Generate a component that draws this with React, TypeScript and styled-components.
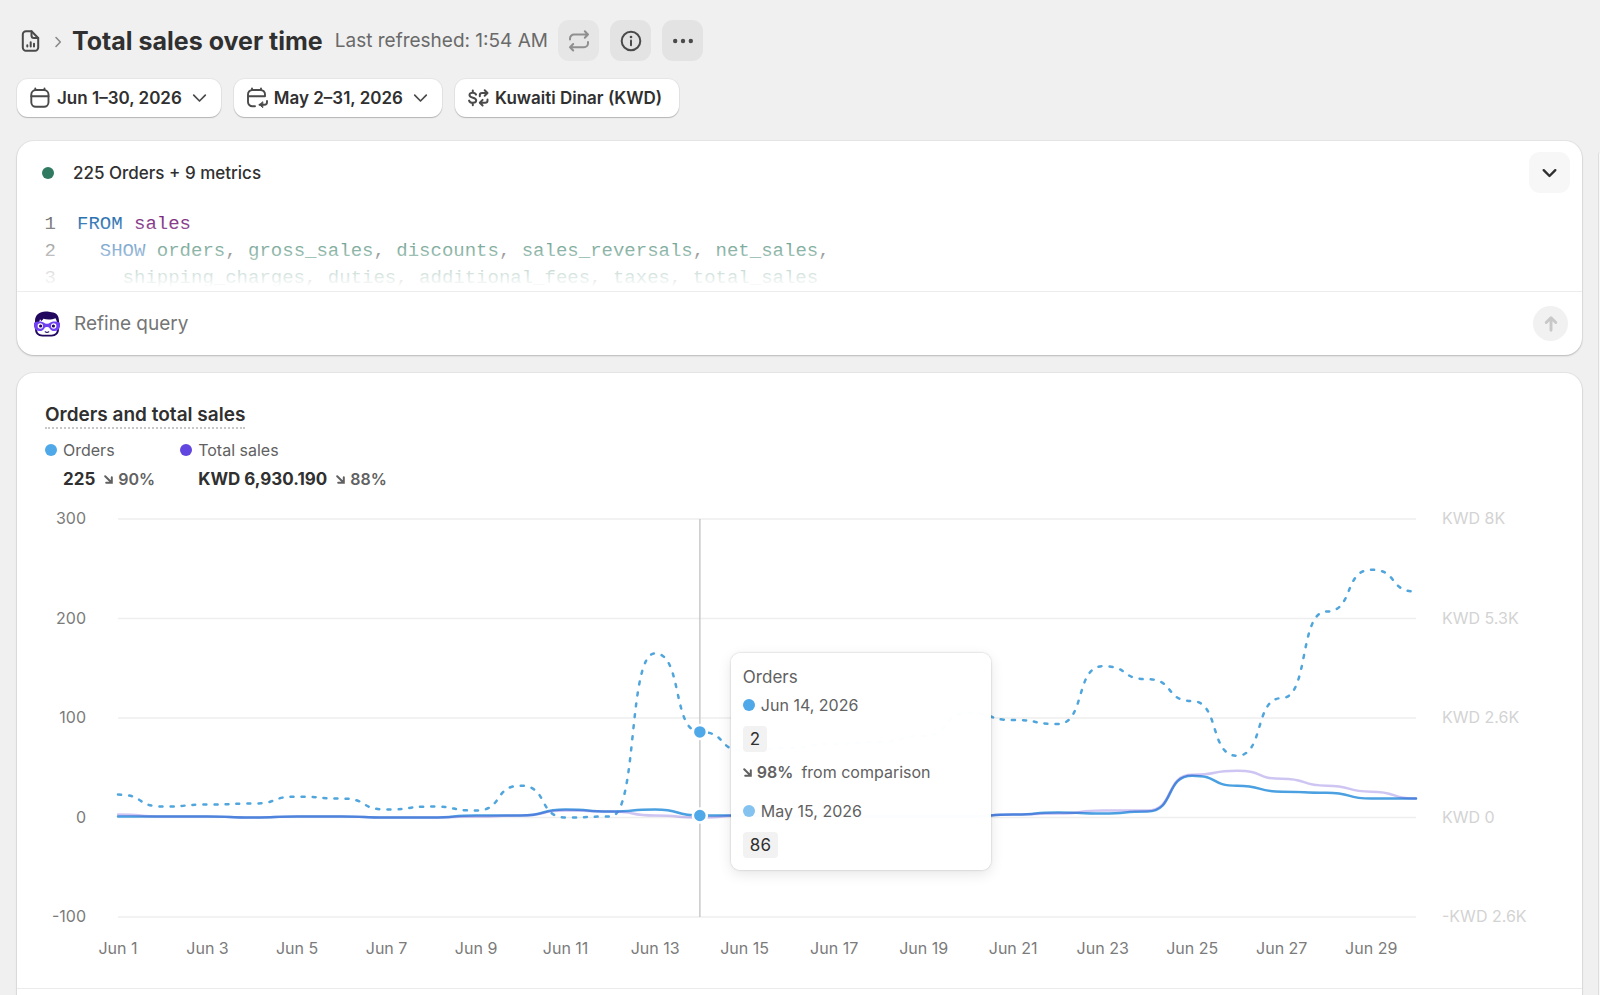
import React, { useLayoutEffect, useRef, useState } from "react";
import styled, { createGlobalStyle } from "styled-components";

const GlobalStyle = createGlobalStyle`
  *, *::before, *::after { box-sizing: border-box; }
  body {
    margin: 0;
    background: #f0f0f0;
    color: #303030;
    font-family: Inter, "Liberation Sans", sans-serif;
    font-size: 16px;
    overflow-x: hidden;
  }
  #root { height: 100vh; overflow: hidden; }
  button, input { font: inherit; color: inherit; }
  h1, h2, p, ul, ol, dl, dd { margin: 0; padding: 0; }
  ul, ol { list-style: none; }
`;

const Shell = styled.div`
  display: flex;
  min-height: 100vh;
`;

const Main = styled.main`
  flex: 1;
  min-width: 0;
  padding: 20px 16px 0 17px;
`;

const SidePanel = styled.aside`
  width: 2px;
  margin-top: 152px;
  border-left: 1px solid #dedede;
  border-top-left-radius: 16px;
  background: #f8f8f8;
`;

const TitleBar = styled.header`
  display: flex;
  align-items: center;
  height: 41px;
  padding-left: 3px;
`;

const Crumb = styled.a`
  display: flex;
  color: #4a4a4a;
`;

const CrumbArrow = styled.span`
  display: flex;
  margin: 3px 10px 0 12px;
  color: #8a8a8a;
`;

const Title = styled.h1`
  font-size: 25px;
  line-height: 32px;
  font-weight: 650;
  white-space: nowrap;
`;

const Refreshed = styled.p`
  margin: 0 10px 0 12px;
  font-size: 19px;
  line-height: 28px;
  color: #6a6a6a;
  white-space: nowrap;
`;

const ActionGroup = styled.div`
  display: flex;
  gap: 11px;
`;

const IconButton = styled.button<{ $tone?: "muted" | "plain" }>`
  display: flex;
  align-items: center;
  justify-content: center;
  width: 41px;
  height: 41px;
  padding: 0;
  border: 0;
  border-radius: 11px;
  background: ${(p) =>
    p.$tone === "muted" ? "#e6e6e6" : p.$tone === "plain" ? "#f7f7f7" : "#e3e3e3"};
  color: ${(p) =>
    p.$tone === "muted" ? "#8f8f8f" : p.$tone === "plain" ? "#303030" : "#4a4a4a"};
`;

const Filters = styled.div`
  display: flex;
  gap: 13px;
  margin: 18px 0 24px;
`;

const FilterButton = styled.button<{ $menu?: boolean }>`
  display: flex;
  align-items: center;
  height: 38px;
  padding: 0 ${(p) => (p.$menu ? 14 : 17)}px 0 13px;
  border: 0;
  border-radius: 11px;
  background: #fff;
  box-shadow: 0 1px 1px #b5b5b5, 0 0 0 1px #e6e6e6;
  font-size: 17px;
  line-height: 24px;
  font-weight: 600;
  white-space: nowrap;
  svg { color: #4a4a4a; }
  svg:first-child { margin-right: 6px; }
  svg:last-child:not(:first-child) { margin-left: 10px; }
`;

const Card = styled.section<{ $continues?: boolean }>`
  border-radius: ${(p) => (p.$continues ? "17px 17px 0 0" : "17px")};
  padding-bottom: ${(p) => (p.$continues ? 40 : 0)}px;
  background: #fff;
  box-shadow: 0 1px 2px rgba(0, 0, 0, 0.2), 0 0 0 1px #e6e6e6;
  & + & { margin-top: 18px; }
`;

const QueryHead = styled.div`
  display: flex;
  align-items: center;
  padding: 11px 12px 0 25px;
  font-size: 17px;
  line-height: 24px;
  font-weight: 450;
  button { margin-left: auto; }
`;

const Dot = styled.span<{ $color: string }>`
  flex: none;
  width: 12px;
  height: 12px;
  border-radius: 50%;
  background: ${(p) => p.$color};
`;

const QueryName = styled.p`
  margin-left: 19px;
`;

const Code = styled.ol`
  position: relative;
  height: 99px;
  padding-top: 18px;
  overflow: hidden;
  border-bottom: 1px solid #ededed;
  font-family: "Liberation Mono", monospace;
  font-size: 19px;
  line-height: 27px;
  &::after {
    content: "";
    position: absolute;
    inset: 24px 0 0;
    background: linear-gradient(rgba(255, 255, 255, 0), #fff 95%);
  }
`;

const CodeLine = styled.li<{ $indent: number }>`
  display: flex;
  white-space: pre;
  code {
    padding-left: ${(p) => p.$indent}ch;
    font: inherit;
  }
`;

const LineNo = styled.span`
  width: 39px;
  margin-right: 21px;
  text-align: right;
  color: #6f6f6f;
`;

const Keyword = styled.span`
  color: #2a70b0;
`;
const Table = styled.span`
  color: #7c2a80;
`;
const Field = styled.span`
  color: #247157;
`;

const RefineForm = styled.form`
  display: flex;
  align-items: center;
  height: 63px;
  padding: 0 14px 0 17px;
`;

const RefineInput = styled.input`
  flex: 1;
  min-width: 0;
  margin: 0 14px;
  padding: 0;
  border: 0;
  outline: 0;
  background: none;
  font-size: 19px;
  line-height: 28px;
  &::placeholder { color: #757575; opacity: 1; }
`;

const SendButton = styled.button`
  display: flex;
  align-items: center;
  justify-content: center;
  width: 35px;
  height: 35px;
  padding: 0;
  border: 0;
  border-radius: 50%;
  background: #f1f1f1;
  color: #c8c8c8;
`;

const ChartSection = styled.div`
  padding: 30px 28px 28px;
  border-bottom: 1px solid #ebebeb;
`;

const ChartTitle = styled.h2`
  width: fit-content;
  border-bottom: 2px dotted #c8c8c8;
  font-size: 19px;
  line-height: 24px;
  font-weight: 580;
`;

const Legend = styled.ul`
  display: flex;
  gap: 25px;
  margin-top: 8px;
`;

const LegendItem = styled.li`
  display: grid;
  grid-template-columns: 12px auto;
  column-gap: 6px;
  row-gap: 4px;
  align-items: center;
`;

const LegendName = styled.span`
  font-size: 16px;
  line-height: 26px;
  color: #616161;
`;

const LegendValue = styled.span`
  display: flex;
  align-items: center;
  grid-column: 2;
  font-size: 17px;
  line-height: 24px;
  font-weight: 650;
`;

const Trend = styled.span`
  display: flex;
  align-items: center;
  gap: 5px;
  margin-left: 9px;
  font-size: 16px;
  font-weight: 600;
  color: #616161;
`;

const ChartGrid = styled.div`
  display: grid;
  grid-template-columns: 73px minmax(0, 1fr) 138px;
  margin-top: 15px;
`;

const Axis = styled.ul<{ $side: "left" | "right" }>`
  display: flex;
  flex-direction: column;
  justify-content: space-between;
  padding: ${(p) => (p.$side === "left" ? "0 32px 0 0" : "0 0 0 26px")};
  font-size: 16px;
  line-height: 24px;
  text-align: ${(p) => (p.$side === "left" ? "right" : "left")};
  color: ${(p) => (p.$side === "left" ? "#7b7b7b" : "#d3d3d3")};
  white-space: nowrap;
`;

const Plot = styled.div`
  position: relative;
  height: 422px;
  padding: 13px 0 11px;
  svg { display: block; overflow: visible; }
`;

const Days = styled.ol`
  display: flex;
  grid-column: 2;
  margin: 8px 0 0 calc(-100% / 29);
  font-size: 16px;
  line-height: 24px;
  color: #7b7b7b;
  li { flex: 1 1 0; text-align: center; white-space: nowrap; }
`;

const Tooltip = styled.div`
  position: absolute;
  top: 147px;
  left: calc(100% * 13 / 29 + 31px);
  width: 260px;
  padding: 12px;
  border-radius: 9px;
  background: rgba(255, 255, 255, 0.98);
  box-shadow: 0 0 2px rgba(0, 0, 0, 0.25), 0 4px 14px rgba(0, 0, 0, 0.1);
  font-size: 16px;
  line-height: 24px;
  color: #616161;
`;

const TooltipTitle = styled.p`
  font-size: 17px;
`;

const TooltipDate = styled.p`
  display: flex;
  align-items: center;
  gap: 6px;
  padding: 4px 0 9px;
`;

const TooltipValue = styled.span`
  display: block;
  width: fit-content;
  padding: 0 7px;
  border-radius: 4px;
  background: #f2f2f2;
  font-size: 17px;
  line-height: 26px;
  color: #303030;
`;

const TooltipTrend = styled.p`
  display: flex;
  align-items: center;
  gap: 5px;
  padding: 8px 0 11px;
  b { font-weight: 600; margin-right: 3px; }
`;

const stroke = {
  fill: "none",
  stroke: "currentColor",
  strokeLinecap: "round" as const,
  strokeLinejoin: "round" as const,
};

const ReportIcon = () => (
  <svg width="22" height="24" viewBox="0 0 22 24" {...stroke} strokeWidth="2" aria-hidden="true">
    <path d="M11.5 2.2H6a3.2 3.2 0 0 0-3.2 3.2v13.2A3.2 3.2 0 0 0 6 21.800h9a3.2 3.2 0 0 0 3.2-3.2V9z" />
    <path d="M11.5 2.2v4.3A2.5 2.5 0 0 0 14 9h4.2" />
    <path d="M7.3 16.3v1.200M10.700 13.300v4.200M14 14.800v2.700" />
  </svg>
);

const CrumbChevron = () => (
  <svg width="8" height="12" viewBox="0 0 8 12" {...stroke} strokeWidth="1.6" aria-hidden="true">
    <path d="M2 1.5 6.3 6 2 10.5" />
  </svg>
);

const RefreshIcon = () => (
  <svg width="24" height="24" viewBox="0 0 24 24" {...stroke} strokeWidth="2" aria-hidden="true">
    <path d="M3 10.5V9.500a4 4 0 0 1 4-4H21M17.800 2.200 21 5.500l-3.200 3.300" />
    <path d="M21 13v1.200a4 4 0 0 1-4 4H3M6.200 15 3 18.200l3.200 3.300" />
  </svg>
);

const InfoIcon = () => (
  <svg width="24" height="24" viewBox="0 0 24 24" {...stroke} strokeWidth="2" aria-hidden="true">
    <circle cx="12" cy="12" r="9.300" />
    <path d="M12 11.500v4.700" />
    <circle cx="12" cy="8" r="1.300" fill="currentColor" stroke="none" />
  </svg>
);

const MoreIcon = () => (
  <svg width="24" height="24" viewBox="0 0 24 24" fill="currentColor" aria-hidden="true">
    <circle cx="4.200" cy="12" r="2.200" />
    <circle cx="12" cy="12" r="2.200" />
    <circle cx="19.800" cy="12" r="2.200" />
  </svg>
);

const CalendarIcon = () => (
  <svg width="21" height="22" viewBox="0 0 21 22" {...stroke} strokeWidth="1.900" aria-hidden="true">
    <rect x="1.300" y="3" width="17.200" height="16.800" rx="4.500" />
    <path d="M1.300 9.300h17.200M5.300 3V1.500M14.500 3V1.500" />
  </svg>
);

const CompareIcon = () => (
  <svg width="21" height="22" viewBox="0 0 21 22" {...stroke} strokeWidth="1.900" aria-hidden="true">
    <path d="M8 19.300H5.300a4.300 4.300 0 0 1-4.300-4.300V7.300A4.300 4.300 0 0 1 5.300 3h8.400A4.300 4.300 0 0 1 18 7.300v2H1M5 3V1.500M14 3V1.500" />
    <path d="M20 14v1.200a2.500 2.500 0 0 1-2.500 2.500h-5" />
    <path d="M15.500 15 12.500 17.700l3 2.700z" fill="currentColor" strokeWidth="1" />
  </svg>
);

const CurrencyIcon = () => (
  <svg width="21" height="20" viewBox="0 0 21 20" {...stroke} strokeWidth="2" aria-hidden="true">
    <path d="M8 6.600C7.500 5.200 6.300 4.700 4.700 4.700c-1.900 0-3.200.8-3.200 2.400C1.500 10.700 8.200 8.700 8.200 12.300c0 1.600-1.400 2.500-3.400 2.500-1.900 0-3.200-.7-3.700-2.200M4.800 2.500v2M4.800 15v2.300" />
    <path d="M11.800 8.300V7.300a2.300 2.300 0 0 1 2.300-2.300h5.200M16.700 2.200 19.500 5l-2.800 2.800" />
    <path d="M19.500 11.500v.900a2.300 2.300 0 0 1-2.300 2.300H12M14.600 11.900l-2.800 2.800 2.800 2.800" />
  </svg>
);

const ChevronDown = ({ heavy = false }: { heavy?: boolean }) => (
  <svg width="15" height="10" viewBox="0 0 15 10" {...stroke} strokeWidth={heavy ? 2.4 : 1.7} aria-hidden="true">
    <path d="M1.700 2.200 7.500 8l5.800-5.800" />
  </svg>
);

const ArrowUp = () => (
  <svg width="16" height="18" viewBox="0 0 16 18" {...stroke} strokeWidth="2.900" aria-hidden="true">
    <path d="M8 15.200V3.500M3.200 7.500 8 2.800l4.800 4.700" />
  </svg>
);

const TrendArrow = () => (
  <svg width="9" height="9" viewBox="0 0 9 9" {...stroke} strokeWidth="2" strokeLinejoin="miter" aria-hidden="true">
    <path d="M1.200 1.200 7 7M7.800 2.200v5.600H2.200" strokeLinejoin="miter" />
  </svg>
);

const Avatar = () => (
  <svg width="26" height="26" viewBox="0 0 26 26" aria-hidden="true">
    <path d="M1 10C1 4 5.500.600 11.500.600c3 0 4 .600 6 .600C22.500 1.200 25 5 25 10v8c0 4.800-3 7.400-7.500 7.400h-9C4 25.400 1 22.800 1 18z" fill="#21085e" />
    <path d="M3 12.500c1.800-.7 2.600-2.300 3-4.300L7.300 10c1-.4 1.500-1.100 2-2.200 4 1.200 9 .9 12.200-.6.900 1.500 1.500 3.300 1.500 5.300v5.800c0 3.500-2.100 5.400-5.500 5.400h-9C5.100 23.700 3 21.800 3 18.300z" fill="#fff" />
    <path d="M0 11.800c3.500-1.600 8-1.800 10.800.4 1.500.8 2.900.8 4.400 0C18 10 22.500 10.200 26 11.800v3.600c-.7 5.600-9 6-10.600 1.500-.8-1.200-4-1.200-4.800 0C9 21.400.700 21 0 15.400z" fill="#7142f2" />
    <circle cx="6.300" cy="15" r="2.700" fill="#fff" />
    <circle cx="19.700" cy="15" r="2.700" fill="#fff" />
    <circle cx="6.600" cy="15" r="1.600" fill="#21085e" />
    <circle cx="19.400" cy="15" r="1.600" fill="#21085e" />
    <path d="M11.200 20.800q1.800 1.200 3.600 0" fill="none" stroke="#21085e" strokeWidth="1.100" strokeLinecap="round" />
  </svg>
);

const PREVIOUS_ORDERS = [
  23, 11, 13, 14, 21, 19, 8, 11, 7, 32, 0, 1, 165, 86, 67, 70, 74, 76, 82, 105, 98, 94, 152, 139,
  117, 62, 120, 207, 249, 227,
];
const ORDERS = [
  1, 1, 1, 0, 1, 1, 0, 0, 2, 2, 8, 6, 8, 2, 2, 1, 1, 1, 1, 1, 3, 5, 4, 6, 42, 32, 26, 25, 19, 19,
];
const SALES = [
  3, 1, 1, 0, 1, 1, 0, 0, 1, 2, 7, 6, 2, 0, 2, 1, 1, 1, 1, 1, 3, 4, 7, 7, 43, 47, 39, 32, 26, 19,
];

const LEFT_TICKS = ["300", "200", "100", "0", "-100"];
const RIGHT_TICKS = ["KWD 8K", "KWD 5.3K", "KWD 2.6K", "KWD 0", "-KWD 2.6K"];
const HEIGHT = 398;
const MAX = 300;
const MIN = -100;
const HOVERED = 13;

const yOf = (value: number) => ((MAX - value) / (MAX - MIN)) * HEIGHT;

// Each segment leaves and enters its points horizontally, giving rounded steps.
function steppedCurve(values: number[], width: number) {
  const step = width / (values.length - 1);
  return values
    .map((value, i) => {
      const x = i * step;
      const y = yOf(value);
      if (i === 0) return `M${x} ${y}`;
      const bend = step * 0.62;
      return `C${x - step + bend} ${yOf(values[i - 1])} ${x - bend} ${y} ${x} ${y}`;
    })
    .join("");
}

function LineChart() {
  const box = useRef<HTMLDivElement>(null);
  const [width, setWidth] = useState(0);

  useLayoutEffect(() => {
    const node = box.current;
    if (!node) return;
    const measure = () => setWidth(node.clientWidth);
    measure();
    const observer = new ResizeObserver(measure);
    observer.observe(node);
    return () => observer.disconnect();
  }, []);

  const hoverX = (width / (ORDERS.length - 1)) * HOVERED;

  return (
    <Plot ref={box}>
      <svg width={width} height={HEIGHT} role="img" aria-label="Orders and total sales by day">
        {LEFT_TICKS.map((tick) => (
          <line key={tick} x1="0" x2={width} y1={yOf(+tick)} y2={yOf(+tick)} stroke="#eeeeee" strokeWidth="1.5" />
        ))}
        <line x1={hoverX} x2={hoverX} y1="0" y2={HEIGHT} stroke="#c9c9c9" strokeWidth="1.5" />
        <g fill="none" strokeLinecap="round" strokeWidth="2.5">
          <path d={steppedCurve(PREVIOUS_ORDERS, width)} stroke="#4fa5dc" strokeDasharray="3 8" />
          <path d={steppedCurve(ORDERS, width)} stroke="#4aa0e0" />
          <path d={steppedCurve(SALES, width)} stroke="#5c3fd8" opacity="0.3" />
        </g>
        {[PREVIOUS_ORDERS, ORDERS].map((series, i) => (
          <circle key={i} cx={hoverX} cy={yOf(series[HOVERED])} r="7" fill="#4fa8e8" stroke="#fff" strokeWidth="2.5" />
        ))}
      </svg>
      <Tooltip role="tooltip">
        <TooltipTitle>Orders</TooltipTitle>
        <TooltipDate>
          <Dot $color="#4fa8e8" />
          Jun 14, 2026
        </TooltipDate>
        <TooltipValue>2</TooltipValue>
        <TooltipTrend>
          <TrendArrow />
          <b>98%</b>
          from comparison
        </TooltipTrend>
        <TooltipDate>
          <Dot $color="#84c2ef" />
          May 15, 2026
        </TooltipDate>
        <TooltipValue>86</TooltipValue>
      </Tooltip>
    </Plot>
  );
}

const Fields = ({ names, open = false }: { names: string[]; open?: boolean }) => (
  <>
    {names.map((name, i) => (
      <React.Fragment key={name}>
        <Field>{name}</Field>
        {i < names.length - 1 ? ", " : open ? "," : ""}
      </React.Fragment>
    ))}
  </>
);

export default function App() {
  return (
    <Shell>
      <GlobalStyle />
      <Main>
        <TitleBar>
          <Crumb href="#reports" aria-label="Reports">
            <ReportIcon />
          </Crumb>
          <CrumbArrow>
            <CrumbChevron />
          </CrumbArrow>
          <Title>Total sales over time</Title>
          <Refreshed>Last refreshed: 1:54 AM</Refreshed>
          <ActionGroup>
            <IconButton $tone="muted" aria-label="Refresh">
              <RefreshIcon />
            </IconButton>
            <IconButton aria-label="About this report">
              <InfoIcon />
            </IconButton>
            <IconButton aria-label="More actions">
              <MoreIcon />
            </IconButton>
          </ActionGroup>
        </TitleBar>

        <Filters>
          <FilterButton $menu>
            <CalendarIcon />
            Jun 1–30, 2026
            <ChevronDown />
          </FilterButton>
          <FilterButton $menu>
            <CompareIcon />
            May 2–31, 2026
            <ChevronDown />
          </FilterButton>
          <FilterButton>
            <CurrencyIcon />
            Kuwaiti Dinar (KWD)
          </FilterButton>
        </Filters>

        <Card>
          <QueryHead>
            <Dot $color="#2f7a60" />
            <QueryName>225 Orders + 9 metrics</QueryName>
            <IconButton $tone="plain" aria-label="Expand query">
              <ChevronDown heavy />
            </IconButton>
          </QueryHead>
          <Code>
            <CodeLine $indent={0}>
              <LineNo>1</LineNo>
              <code>
                <Keyword>FROM</Keyword> <Table>sales</Table>
              </code>
            </CodeLine>
            <CodeLine $indent={2}>
              <LineNo>2</LineNo>
              <code>
                <Keyword>SHOW</Keyword>{" "}
                <Fields names={["orders", "gross_sales", "discounts", "sales_reversals", "net_sales"]} open />
              </code>
            </CodeLine>
            <CodeLine $indent={4}>
              <LineNo>3</LineNo>
              <code>
                <Fields names={["shipping_charges", "duties", "additional_fees", "taxes", "total_sales"]} />
              </code>
            </CodeLine>
          </Code>
          <RefineForm>
            <Avatar />
            <RefineInput type="text" placeholder="Refine query" aria-label="Refine query" />
            <SendButton type="button" aria-label="Send">
              <ArrowUp />
            </SendButton>
          </RefineForm>
        </Card>

        <Card $continues>
          <ChartSection>
            <ChartTitle>Orders and total sales</ChartTitle>
            <Legend>
              <LegendItem>
                <Dot $color="#4fa8e8" />
                <LegendName>Orders</LegendName>
                <LegendValue>
                  225
                  <Trend>
                    <TrendArrow />
                    90%
                  </Trend>
                </LegendValue>
              </LegendItem>
              <LegendItem>
                <Dot $color="#6246e0" />
                <LegendName>Total sales</LegendName>
                <LegendValue>
                  KWD 6,930.190
                  <Trend>
                    <TrendArrow />
                    88%
                  </Trend>
                </LegendValue>
              </LegendItem>
            </Legend>
            <ChartGrid>
              <Axis $side="left">
                {LEFT_TICKS.map((tick) => (
                  <li key={tick}>{tick}</li>
                ))}
              </Axis>
              <LineChart />
              <Axis $side="right">
                {RIGHT_TICKS.map((tick) => (
                  <li key={tick}>{tick}</li>
                ))}
              </Axis>
              <Days>
                {Array.from({ length: 15 }, (_, i) => (
                  <li key={i}>Jun {i * 2 + 1}</li>
                ))}
              </Days>
            </ChartGrid>
          </ChartSection>
        </Card>
      </Main>
      <SidePanel />
    </Shell>
  );
}
